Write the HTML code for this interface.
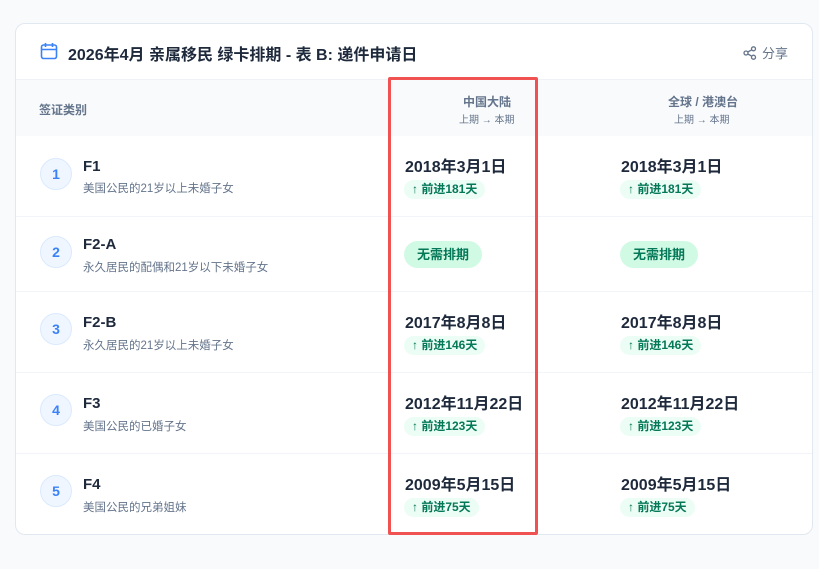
<!DOCTYPE html>
<html><head><meta charset="utf-8"><style>
*{box-sizing:border-box;margin:0;padding:0}
body{width:819px;height:569px;background:#f8fafc;font-family:"Liberation Sans","Noto Sans CJK SC",sans-serif;position:relative;overflow:hidden}
.card{position:absolute;left:15px;top:23px;width:798px;height:512px;background:#fff;border:1px solid #e2e8f0;border-radius:10px;overflow:hidden}
.hd{height:56px;border-bottom:1px solid #eef1f5;position:relative}
.title{position:absolute;left:52px;top:17px;font-size:16px;font-weight:bold;color:#1e293b}
.cal{position:absolute;left:24px;top:18px}
.share{position:absolute;right:24px;top:19px;font-size:13px;color:#64748b}
.th{height:56px;background:#f8fafc;position:relative;font-size:12px;color:#64748b;font-weight:bold}
.row{position:relative;border-bottom:1px solid #f1f5f9}
.num{position:absolute;left:24px;width:32px;height:32px;border-radius:50%;background:#eff6ff;border:1px solid #dbeafe;color:#3b82f6;font-size:14px;font-weight:bold;text-align:center;line-height:30px}
.nm{position:absolute;left:67px;font-size:15px;font-weight:bold;color:#1e293b}
.ds{position:absolute;left:67px;font-size:11.5px;color:#64748b}
.dt{position:absolute;font-size:16px;font-weight:bold;color:#1e293b}
.bd{position:absolute;font-size:12px;font-weight:bold;color:#047857;background:#ecfdf5;border-radius:10px;padding:2px 8px;line-height:15px}
.no{position:absolute;font-size:13px;font-weight:bold;color:#047857;background:#d1fae5;border-radius:14px;padding:0 13px;line-height:27px}
.red{position:absolute;left:388px;top:77px;width:150px;height:458px;border:3px solid #f05252;border-radius:2px}
</style></head><body>
<div class="card">
<div class="hd">
<svg class="cal" width="18" height="18" viewBox="0 0 18 18" fill="none" stroke="#3b82f6" stroke-width="1.6"><rect x="1.5" y="3" width="15" height="13.5" rx="2"/><path d="M1.5 7.5h15M5.5 1v4M12.5 1v4"/></svg>
<div class="title">2026年4月 亲属移民 绿卡排期 - 表 B: 递件申请日</div>
<div class="share"><svg width="14" height="14" viewBox="0 0 14 14" fill="none" stroke="#64748b" stroke-width="1.3" style="vertical-align:-2px;margin-right:5px"><circle cx="10.5" cy="2.8" r="2"/><circle cx="3" cy="7" r="2"/><circle cx="10.5" cy="11.2" r="2"/><path d="M4.8 6l4-2.2M4.8 8l4 2.2"/></svg>分享</div>
</div>
<div class="th">
<div style="position:absolute;left:23px;top:21px">签证类别</div>
<div style="position:absolute;left:447px;top:13px">中国大陆</div>
<div style="position:absolute;left:443px;top:31px;font-size:10px;font-weight:normal">上期 → 本期</div>
<div style="position:absolute;left:652px;top:13px">全球 / 港澳台</div>
<div style="position:absolute;left:658px;top:31px;font-size:10px;font-weight:normal">上期 → 本期</div>
</div>
<div class="row" style="height:81px"><div class="num" style="top:22px">1</div><div class="nm" style="top:22px">F1</div><div class="ds" style="top:44px">美国公民的21岁以上未婚子女</div>
<div class="dt" style="left:389px;top:17px">2018年3月1日</div><div class="bd" style="left:388px;top:44px">↑ 前进181天</div>
<div class="dt" style="left:605px;top:17px">2018年3月1日</div><div class="bd" style="left:604px;top:44px">↑ 前进181天</div></div>
<div class="row" style="height:75px"><div class="num" style="top:19px">2</div><div class="nm" style="top:19px">F2-A</div><div class="ds" style="top:42px">永久居民的配偶和21岁以下未婚子女</div>
<div class="no" style="left:388px;top:24px">无需排期</div><div class="no" style="left:604px;top:24px">无需排期</div></div>
<div class="row" style="height:81px"><div class="num" style="top:21px">3</div><div class="nm" style="top:22px">F2-B</div><div class="ds" style="top:45px">永久居民的21岁以上未婚子女</div>
<div class="dt" style="left:389px;top:17px">2017年8月8日</div><div class="bd" style="left:388px;top:44px">↑ 前进146天</div>
<div class="dt" style="left:605px;top:17px">2017年8月8日</div><div class="bd" style="left:604px;top:44px">↑ 前进146天</div></div>
<div class="row" style="height:81px"><div class="num" style="top:21px">4</div><div class="nm" style="top:22px">F3</div><div class="ds" style="top:45px">美国公民的已婚子女</div>
<div class="dt" style="left:389px;top:17px">2012年11月22日</div><div class="bd" style="left:388px;top:44px">↑ 前进123天</div>
<div class="dt" style="left:605px;top:17px">2012年11月22日</div><div class="bd" style="left:604px;top:44px">↑ 前进123天</div></div>
<div class="row" style="height:81px;border:none"><div class="num" style="top:21px">5</div><div class="nm" style="top:22px">F4</div><div class="ds" style="top:45px">美国公民的兄弟姐妹</div>
<div class="dt" style="left:389px;top:17px">2009年5月15日</div><div class="bd" style="left:388px;top:44px">↑ 前进75天</div>
<div class="dt" style="left:605px;top:17px">2009年5月15日</div><div class="bd" style="left:604px;top:44px">↑ 前进75天</div></div>
</div>
<div class="red"></div>
</body></html>
